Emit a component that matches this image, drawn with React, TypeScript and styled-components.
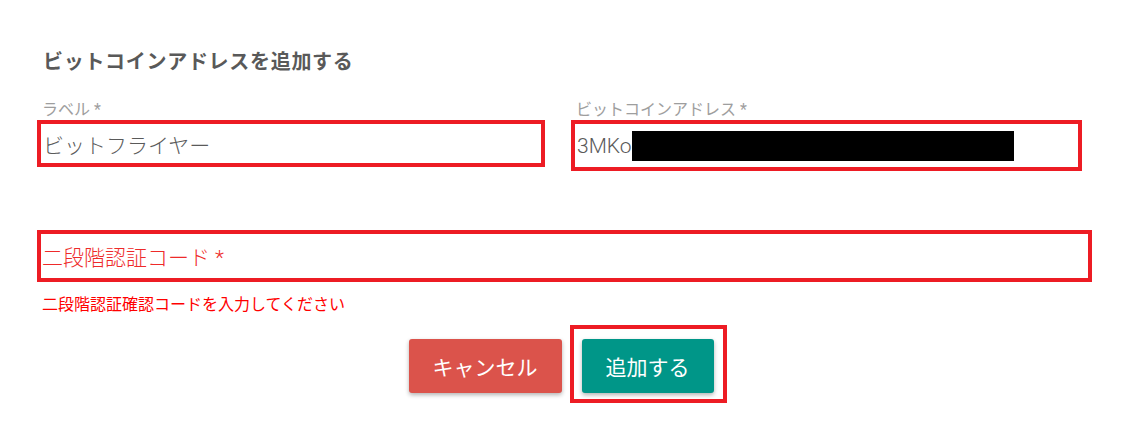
import React from "react";
import styled, { createGlobalStyle } from "styled-components";

const GlobalStyle = createGlobalStyle`
  html, body {
    margin: 0;
    padding: 0;
    background: #ffffff;
  }
  body {
    font-family: Roboto, "Noto Sans CJK JP", "Noto Sans", sans-serif;
    color: #555555;
  }
`;

const Dialog = styled.div`
  width: 1124px;
  height: 436px;
  box-sizing: border-box;
  padding: 50px 0 0 37px;
  background: #ffffff;
  border-radius: 4px;
  overflow: hidden;
`;

const Title = styled.h2`
  margin: 0 0 0 6px;
  font-size: 20px;
  line-height: 24px;
  letter-spacing: 0.7px;
  font-weight: 700;
  color: #595959;
`;

const FieldRow = styled.div`
  display: grid;
  grid-template-columns: 508px 511px;
  column-gap: 26px;
  align-items: start;
  margin-top: 27px;
`;

const Field = styled.div`
  display: flex;
  flex-direction: column;
`;

const Label = styled.label`
  padding-left: 5px;
  font-size: 16px;
  line-height: 18px;
  color: #9e9e9e;
  margin-bottom: 1px;
`;

const InputBox = styled.div<{ $height: number; $width?: number; $error?: boolean }>`
  box-sizing: border-box;
  height: ${({ $height }) => $height}px;
  width: ${({ $width }) => ($width ? `${$width}px` : "auto")};
  border: 4px solid #ed1c24;
  padding: 0 2px;
  display: flex;
  align-items: center;
  font-size: 21px;
  font-weight: 300;
  color: ${({ $error }) => ($error ? "#ee2a2a" : "#5a5a5a")};
  white-space: nowrap;
  overflow: hidden;
`;

const Redaction = styled.span`
  display: inline-block;
  width: 382px;
  height: 30px;
  background: #000000;
`;

const CodeBox = styled(InputBox)`
  margin-top: 59px;
  padding-left: 1px;
`;

const ErrorText = styled.div`
  margin: 14px 0 0 5px;
  font-size: 16px;
  line-height: 18px;
  color: #ff0000;
`;

const Actions = styled.div`
  display: flex;
  justify-content: center;
  gap: 20px;
  margin: 25px 0 0 -39px;
`;

const Button = styled.button<{ $variant: "cancel" | "submit" }>`
  height: 54px;
  width: ${({ $variant }) => ($variant === "cancel" ? 153 : 132)}px;
  padding: 0;
  border: none;
  border-radius: 3px;
  font-family: inherit;
  font-size: 21px;
  color: #ffffff;
  background: ${({ $variant }) => ($variant === "cancel" ? "#db534b" : "#009688")};
  box-shadow: 0 2px 4px rgba(0, 0, 0, 0.3);
  cursor: pointer;
`;

const Highlight = styled.div`
  position: relative;

  &::after {
    content: "";
    position: absolute;
    top: -14px;
    left: -12px;
    right: -13px;
    bottom: -10px;
    border: 4px solid #ed1c24;
    pointer-events: none;
  }
`;

export default function App() {
  return (
    <>
      <GlobalStyle />
      <Dialog>
        <Title>ビットコインアドレスを追加する</Title>
        <FieldRow>
          <Field>
            <Label>ラベル *</Label>
            <InputBox $height={47}>ビットフライヤー</InputBox>
          </Field>
          <Field>
            <Label>ビットコインアドレス *</Label>
            <InputBox $height={51}>
              3MKo<Redaction />
            </InputBox>
          </Field>
        </FieldRow>
        <CodeBox $height={52} $width={1055} $error>
          二段階認証コード *
        </CodeBox>
        <ErrorText>二段階認証確認コードを入力してください</ErrorText>
        <Actions>
          <Button $variant="cancel">キャンセル</Button>
          <Highlight>
            <Button $variant="submit">追加する</Button>
          </Highlight>
        </Actions>
      </Dialog>
    </>
  );
}
